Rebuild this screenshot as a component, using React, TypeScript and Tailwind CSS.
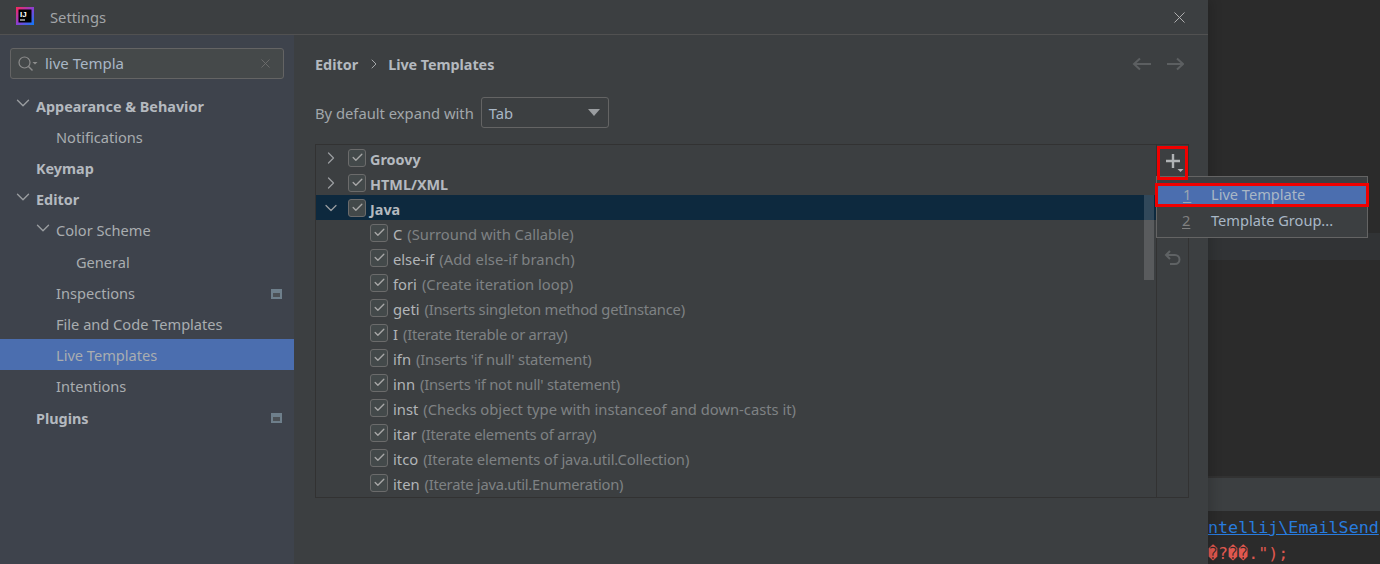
import { ChevronDown, ChevronRight, Check, X } from "lucide-react";

const FONT = "font-['Noto_Sans','Open_Sans',sans-serif]";

const NAV = [
  { label: "Appearance & Behavior", depth: 0, bold: true, open: true },
  { label: "Notifications", depth: 1 },
  { label: "Keymap", depth: 0, bold: true },
  { label: "Editor", depth: 0, bold: true, open: true },
  { label: "Color Scheme", depth: 1, open: true },
  { label: "General", depth: 2 },
  { label: "Inspections", depth: 1, badge: true },
  { label: "File and Code Templates", depth: 1 },
  { label: "Live Templates", depth: 1, active: true },
  { label: "Intentions", depth: 1 },
  { label: "Plugins", depth: 0, bold: true, badge: true },
];

const TEMPLATES = [
  ["C", "(Surround with Callable)", ""],
  ["else-if", "(Add else-if branch)", "tracking-[0.1px]"],
  ["fori", "(Create iteration loop)", ""],
  ["geti", "(Inserts singleton method getInstance)", "tracking-[-0.24px]"],
  ["I", "(Iterate Iterable or array)", "tracking-[-0.27px]"],
  ["ifn", "(Inserts 'if null' statement)", "tracking-[-0.17px]"],
  ["inn", "(Inserts 'if not null' statement)", "tracking-[-0.24px]"],
  ["inst", "(Checks object type with instanceof and down-casts it)", ""],
  ["itar", "(Iterate elements of array)", "tracking-[-0.22px]"],
  ["itco", "(Iterate elements of java.util.Collection)", "tracking-[-0.1px]"],
  ["iten", "(Iterate java.util.Enumeration)", "tracking-[-0.26px]"],
];

function Box() {
  return (
    <span className="flex h-[18px] w-[18px] shrink-0 items-center justify-center rounded-[3px] border-[1.5px] border-[#6b6b6b] bg-[#43494a]">
      <Check size={13} strokeWidth={2.5} className="text-[#a7a7a7]" />
    </span>
  );
}

function Badge() {
  return (
    <span className="flex h-[10px] w-[11px] items-center justify-center border-t-2 border-[#6e7f8b] bg-[#6e7f8b]">
      <span className="h-[4px] w-[7px] bg-[#4c5156]" />
    </span>
  );
}

function Sidebar() {
  return (
    <div className="flex h-full w-[294px] shrink-0 flex-col bg-[#3e434c] pt-[13px]">
      <div className="mx-[10px] flex h-[31px] items-center rounded-[3px] border border-[#646464] bg-[#45494a] pl-[6px] pr-[10px]">
        <svg width="22" height="18" viewBox="0 0 22 18" fill="none" className="shrink-0">
          <circle cx="7.500" cy="7.500" r="5.500" stroke="#8c8c8c" strokeWidth="1.200" />
          <path d="M11.500 11.500l4 4" stroke="#8c8c8c" strokeWidth="1.500" />
          <path d="M15.500 7h5l-2.500 2.500z" fill="#8c8c8c" />
        </svg>
        <span className="ml-[6px] flex-1 text-[15px] text-[#a9b7c6]">live Templa</span>
        <X size={15} strokeWidth={1.4} className="text-[#6f6f6f]" />
      </div>
      <div className="mt-[10px] flex flex-col">
        {NAV.map((n) => (
          <div
            key={n.label}
            className={`relative flex h-[31.2px] items-center pr-[12px] pt-[4px] ${n.active ? "bg-[#4b6eaf]" : ""} ${n.bold ? "text-[14.400px] font-bold text-[#b4b9bf]" : "text-[14.600px] text-[#a9adb0]"} ${n.depth === 0 ? "pl-[36px]" : n.depth === 1 ? "pl-[56px]" : "pl-[76px]"}`}
          >
            {n.open && (
              <ChevronDown
                size={22}
                strokeWidth={1.5}
                className={`absolute top-[3px] text-[#9a9da0] ${n.depth === 0 ? "left-[12px]" : "left-[32px]"}`}
              />
            )}
            <span className="flex-1">{n.label}</span>
            {n.badge && <Badge />}
          </div>
        ))}
      </div>
    </div>
  );
}

function TreeGroup({ label, open, selected }: { label: string; open?: boolean; selected?: boolean }) {
  const Chevron = open ? ChevronDown : ChevronRight;
  return (
    <div className={`flex h-[25px] shrink-0 items-center pl-[5px] ${selected ? "bg-[#0d293e]" : ""}`}>
      <Chevron size={20} strokeWidth={1.5} className="shrink-0 text-[#9a9da0]" />
      <span className="ml-[7px]">
        <Box />
      </span>
      <span className="ml-[4px] mt-[4px] text-[14.400px] font-bold text-[#b4b9bf]">{label}</span>
    </div>
  );
}

function TemplateList() {
  return (
    <div className="mt-[16px] flex h-[354px] w-[874px] border border-[#323232]">
      <div className="relative flex min-w-0 flex-1 flex-col overflow-hidden">
        <TreeGroup label="Groovy" />
        <TreeGroup label="HTML/XML" />
        <TreeGroup label="Java" open selected />
        {TEMPLATES.map(([name, desc, spacing]) => (
          <div key={name} className="flex h-[25px] shrink-0 items-center pl-[54px] text-[14.750px]">
            <Box />
            <span className="ml-[5px] mt-[4px] text-[#b2b5b8]">{name}</span>
            <span className={`ml-[5px] mt-[4px] text-[#7f8284] ${spacing}`}>{desc}</span>
          </div>
        ))}
        <span className="absolute right-[2px] top-[50px] h-[85px] w-[10px] bg-white/15" />
      </div>
      <div className="flex w-[32px] shrink-0 flex-col items-center border-l border-[#323232] pt-[7px]">
        <svg width="20" height="22" viewBox="0 0 20 22" fill="none" className="ml-[2px]">
          <path d="M9 2v14M2 9h14" stroke="#b0b3b5" strokeWidth="2.400" />
          <path d="M13.500 17h6l-3 3z" fill="#b0b3b5" />
        </svg>
        <svg width="18" height="18" viewBox="0 0 18 18" fill="none" className="mt-[75px]">
          <path d="M6 2L2 6l4 4M2.500 6H11a4.500 4.500 0 0 1 0 9H6" stroke="#5f6264" strokeWidth="2" />
        </svg>
      </div>
    </div>
  );
}

function Popup() {
  return (
    <div className="absolute left-[1156px] top-[176px] z-20 flex h-[62px] w-[212px] flex-col border border-[#646464] bg-[#3c3f41] text-[14.600px]">
      <div className="h-[9px] shrink-0" />
      <div className="mx-[1px] flex h-[18px] shrink-0 items-center bg-[#4b6eaf] pl-[25px] text-[#a9b7c6] outline-3 outline-[#f00000]">
        <span className="w-[28px] text-[#9aa5b1] underline underline-offset-2">1</span>
        <span>Live Template</span>
      </div>
      <div className="flex flex-1 items-center pl-[25px] text-[#a9b7c6]">
        <span className="w-[29px] text-[#808080] underline underline-offset-2">2</span>
        <span>Template Group...</span>
      </div>
    </div>
  );
}

export default function App() {
  return (
    <div className={`relative flex h-[564px] w-[1380px] overflow-hidden bg-[#2b2b2b] ${FONT}`}>
      <div className="relative z-10 flex h-full w-[1208px] shrink-0 flex-col bg-[#3c3f41] shadow-[4px_0_10px_rgba(0,0,0,0.15)]">
        <div className="flex h-[35px] shrink-0 items-center border-b border-[#515151] pl-[16px] pr-[19px]">
          <svg width="18" height="18" viewBox="0 0 18 18" className="-mt-[2px] shrink-0">
            <defs>
              <linearGradient id="ij" x1="0" y1="0" x2="1" y2="1">
                <stop offset="0" stopColor="#fe2857" />
                <stop offset="0.500" stopColor="#8b3fd0" />
                <stop offset="1" stopColor="#087cfa" />
              </linearGradient>
            </defs>
            <rect width="18" height="18" fill="url(#ij)" />
            <rect x="2.500" y="2.500" width="13" height="13" fill="#000" />
            <text x="4" y="9.800" fontSize="8" fontWeight="700" fill="#fff" fontFamily="Liberation Sans, sans-serif">IJ</text>
            <rect x="4" y="12.500" width="5" height="1" fill="#fff" />
          </svg>
          <span className="ml-[16px] flex-1 text-[14.750px] text-[#a2a5a8]">Settings</span>
          <X size={19} strokeWidth={1.2} className="text-[#b5b5b5]" />
        </div>
        <div className="flex min-h-0 flex-1">
          <Sidebar />
          <div className="flex min-w-0 flex-1 flex-col px-[21px] pt-[16px]">
            <div className="flex h-[26px] items-center text-[14.400px] font-bold text-[#b4b9bf]">
              <span className="mt-[2px]">Editor</span>
              <ChevronRight size={16} strokeWidth={1.5} className="ml-[8px] text-[#a5a8aa]" />
              <span className="ml-[6px] mt-[2px] flex-1 tracking-[-0.05px]">Live Templates</span>
              <svg width="52" height="14" viewBox="0 0 52 14" fill="none" className="mr-[3px]">
                <path d="M19 7H2M8 1.500L2 7l6 5.500M35 7h16M45 1.500L51 7l-6 5.500" stroke="#5c5f61" strokeWidth="2" />
              </svg>
            </div>
            <div className="mt-[20px] flex items-center text-[14.750px] text-[#a2a7ab]">
              <span className="mt-[1px]">By default expand with</span>
              <div className="ml-[7px] flex h-[31px] w-[128px] items-center justify-between rounded-[3px] border border-[#646464] pl-[7px] pr-[8px] text-[#a9b7c6]">
                <span className="mt-[1px]">Tab</span>
                <span className="h-0 w-0 border-x-[6px] border-t-[7px] border-x-transparent border-t-[#9a9da0]" />
              </div>
            </div>
            <TemplateList />
          </div>
        </div>
      </div>

      <div className="flex min-w-0 flex-1 flex-col">
        <div className="mt-[233px] h-[27px] bg-[#313335]" />
        <div className="mt-[216px] h-[35px] border-t-2 border-[#323232] bg-[#3c3f41]" />
        <div className="flex flex-1 flex-col overflow-hidden whitespace-pre pt-[3px] font-['DejaVu_Sans_Mono',monospace] text-[16.700px]">
          <span className="leading-[26px] text-[#287bde] underline">ntellij\EmailSend</span>
          <span className="leading-[26px] text-[#e0584f]">�?��.");</span>
        </div>
      </div>

      <Popup />
      <span className="pointer-events-none absolute left-[1157px] top-[146px] z-20 h-[34px] w-[31px] border-[3px] border-[#f00000]" />
    </div>
  );
}
